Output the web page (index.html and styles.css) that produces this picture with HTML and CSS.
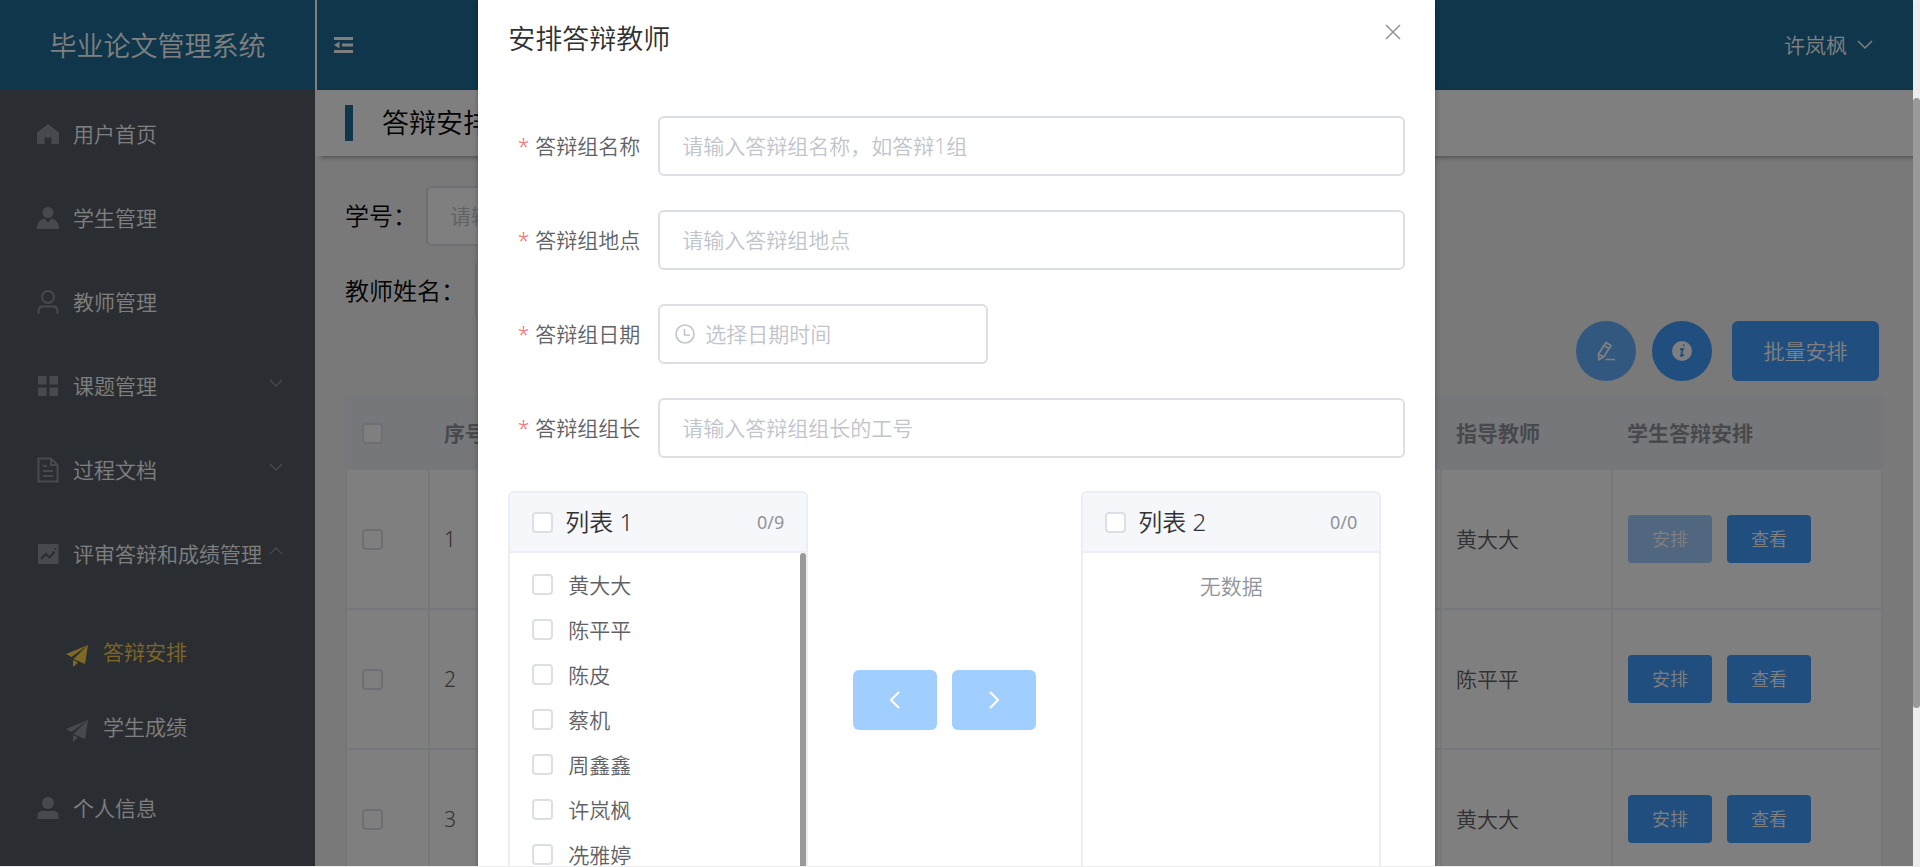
FILE: index.html
```html
<!DOCTYPE html>
<html lang="zh-CN">
<head>
<meta charset="utf-8">
<title>毕业论文管理系统</title>
<link rel="stylesheet" href="styles.css">
</head>
<body>
<div class="app">
  <aside class="sidebar">
    <div class="logo">毕业论文管理系统</div>
    <nav>
      <ul class="menu">
        <li><a class="menu-item" href="#"><svg class="icon" viewBox="0 0 22 22"><path d="M11 1 22 9.500V21h-7.500v-6.500h-7V21H0V9.500z"/></svg>用户首页</a></li>
        <li><a class="menu-item" href="#"><svg class="icon" viewBox="0 0 22 22"><circle cx="11" cy="5.500" r="5.500"/><path d="M0 22c0-6 3-9.500 7.500-10.500L11 16l3.500-4.500C19 12.500 22 16 22 22z"/></svg>学生管理</a></li>
        <li><a class="menu-item" href="#"><svg class="icon line" viewBox="0 0 22 22"><circle cx="11" cy="6" r="6"/><path d="M1.500 23v-3q0-4.500 4.500-4.500h10q4.500 0 4.500 4.500v3"/></svg>教师管理</a></li>
        <li><a class="menu-item" href="#"><svg class="icon" viewBox="0 0 22 22"><path d="M1 1h8.500v8.500H1zM12.500 1H21v8.500h-8.500zM1 12.500h8.500V21H1zM12.500 12.500H21V21h-8.500z"/></svg><span class="menu-text">课题管理</span><svg class="arrow" viewBox="0 0 14 8"><path d="M1 1l6 6 6-6"/></svg></a></li>
        <li><a class="menu-item" href="#"><svg class="icon line" viewBox="0 0 22 22"><path d="M1.500-.5H14l6.500 6.500v16.500h-19zM14 0v6h6M6 7h4M6 12h10M6 17h10"/></svg><span class="menu-text">过程文档</span><svg class="arrow" viewBox="0 0 14 8"><path d="M1 1l6 6 6-6"/></svg></a></li>
        <li>
          <a class="menu-item" href="#"><svg class="icon" viewBox="0 0 22 22"><path d="M1 1h20.500v20H1z"/><path class="trend" d="M4 16l5-5 3.500 3.500 5-6M18 6.500l1-1"/></svg><span class="menu-text">评审答辩和成绩管理</span><svg class="arrow" viewBox="0 0 14 8"><path d="M1 7l6-6 6 6"/></svg></a>
          <ul class="submenu">
            <li><a class="menu-item active" href="#"><svg class="icon" viewBox="0 0 22 22"><path d="M0 9 22 0 5.500 12zM22 0 19 19l-11.500-5zM7 15l5 2.500L7 22z"/></svg>答辩安排</a></li>
            <li><a class="menu-item" href="#"><svg class="icon" viewBox="0 0 22 22"><path d="M0 9 22 0 5.500 12zM22 0 19 19l-11.500-5zM7 15l5 2.500L7 22z"/></svg>学生成绩</a></li>
          </ul>
        </li>
        <li><a class="menu-item" href="#"><svg class="icon" viewBox="0 0 22 22"><circle cx="11" cy="6" r="6"/><path d="M.5 22v-3q0-5 5-5h11q5 0 5 5v3z"/></svg>个人信息</a></li>
      </ul>
    </nav>
  </aside>

  <div class="main">
    <header class="topbar">
      <button class="collapse" aria-label="收起菜单"><svg width="19" height="16" viewBox="0 0 19 16"><path d="M0 0h19v3H0zM8 6.500h11v3H8zM0 13h19v3H0zM0 8l5.500-3.500v7z"/></svg></button>
      <button class="user">许岚枫<svg width="16" height="10" viewBox="0 0 16 10"><path d="M1 1l7 7 7-7"/></svg></button>
    </header>
    <h1 class="page-title">答辩安排</h1>
    <main class="content">
      <form class="filters">
        <div class="filter"><label for="sno">学号：</label><input class="field" id="sno" type="text" placeholder="请输入学号"></div>
        <div class="filter wide"><label for="tname">教师姓名：</label><input class="field" id="tname" type="text"></div>
      </form>
      <div class="actions">
        <button class="round light" aria-label="编辑"><svg width="20" height="20" viewBox="0 0 20 20"><path class="stroke" d="M10 1.500l5 3-7 11-5 3-.5-5.500zM8 4.500l5 3M3 13.500l5 2.500M9.500 18.500H19"/></svg></button>
        <button class="round" aria-label="说明"><svg width="20" height="20" viewBox="0 0 20 20"><circle cx="10" cy="10" r="10"/><path class="mark" d="M11.300 4.500l1-.8M8 8.500l3-.5-2 6.500q0 1.500 2.800-1"/></svg></button>
        <button class="batch">批量安排</button>
      </div>
      <table class="grid">
        <colgroup><col class="c-check"><col><col class="c-teacher"><col class="c-ops"></colgroup>
        <thead>
          <tr><th><input type="checkbox" aria-label="全选"></th><th>序号</th><th>指导教师</th><th>学生答辩安排</th></tr>
        </thead>
        <tbody>
          <tr><td><input type="checkbox" aria-label="选择 1"></td><td>1</td><td>黄大大</td><td><div class="ops"><button disabled>安排</button><button>查看</button></div></td></tr>
          <tr><td><input type="checkbox" aria-label="选择 2"></td><td>2</td><td>陈平平</td><td><div class="ops"><button>安排</button><button>查看</button></div></td></tr>
          <tr><td><input type="checkbox" aria-label="选择 3"></td><td>3</td><td>黄大大</td><td><div class="ops"><button>安排</button><button>查看</button></div></td></tr>
        </tbody>
      </table>
    </main>
  </div>

  <div class="overlay">
    <section class="dialog" role="dialog" aria-labelledby="dlg-title">
      <div class="dialog-head">
        <h2 id="dlg-title">安排答辩教师</h2>
        <button class="close" aria-label="关闭"><svg width="16" height="16" viewBox="0 0 16 16"><path d="M1 1l14 14M15 1 1 15"/></svg></button>
      </div>
      <form class="dialog-form">
        <div class="row"><label for="g-name">答辩组名称</label><input class="field" id="g-name" type="text" placeholder="请输入答辩组名称，如答辩1组"></div>
        <div class="row"><label for="g-place">答辩组地点</label><input class="field" id="g-place" type="text" placeholder="请输入答辩组地点"></div>
        <div class="row"><label for="g-date">答辩组日期</label><div class="date field"><svg width="20" height="20" viewBox="0 0 20 20"><circle cx="10" cy="10" r="9"/><path d="M9.500 5v6H15"/></svg><input id="g-date" type="text" placeholder="选择日期时间"></div></div>
        <div class="row"><label for="g-head">答辩组组长</label><input class="field" id="g-head" type="text" placeholder="请输入答辩组组长的工号"></div>
      </form>
      <div class="transfer">
        <div class="panel">
          <div class="panel-head"><label><input type="checkbox">列表 1</label><span>0/9</span></div>
          <div class="panel-body">
            <ul>
              <li><label><input type="checkbox">黄大大</label></li>
              <li><label><input type="checkbox">陈平平</label></li>
              <li><label><input type="checkbox">陈皮</label></li>
              <li><label><input type="checkbox">蔡机</label></li>
              <li><label><input type="checkbox">周鑫鑫</label></li>
              <li><label><input type="checkbox">许岚枫</label></li>
              <li><label><input type="checkbox">冼雅婷</label></li>
            </ul>
            <div class="list-thumb"></div>
          </div>
        </div>
        <div class="transfer-buttons">
          <button disabled aria-label="移到左侧"><svg width="10" height="18" viewBox="0 0 10 18"><path d="M9 1 1 9l8 8"/></svg></button>
          <button disabled aria-label="移到右侧"><svg width="10" height="18" viewBox="0 0 10 18"><path d="M1 1l8 8-8 8"/></svg></button>
        </div>
        <div class="panel">
          <div class="panel-head"><label><input type="checkbox">列表 2</label><span>0/0</span></div>
          <div class="panel-body"><p class="empty">无数据</p></div>
        </div>
      </div>
    </section>
  </div>
  <div class="scrollbar"><div class="scroll-thumb"></div></div>
</div>
</body>
</html>
```
FILE: styles.css
```css
* { box-sizing: border-box; }
body {
  margin: 0;
  height: 100vh;
  overflow: hidden;
  background: #eeeeee;
  border-bottom: 1px solid #eeeeee;
  font-family: "Noto Sans", "Noto Sans CJK SC", sans-serif;
  font-size: 21px;
  font-weight: 350;
  line-height: 30px;
  color: #606266;
}
ul { list-style: none; margin: 0; padding: 0; }
h1, h2, p { margin: 0; font-weight: inherit; }
button, input { font: inherit; }
button { border: 0; padding: 0; background: none; color: #ffffff; }
a { color: inherit; text-decoration: none; }
svg { display: block; flex: none; }
input[type="checkbox"] {
  appearance: none;
  display: block;
  flex: none;
  width: 21px;
  height: 21px;
  margin: 0;
  background: #ffffff;
  border: 2px solid #dcdfe6;
  border-radius: 4px;
}
.field {
  height: 60px;
  min-width: 0;
  padding: 0 22px;
  background: #ffffff;
  border: 2px solid #dcdfe6;
  border-radius: 6px;
  outline: 0;
}
::placeholder { color: #c0c4cc; opacity: 1; }

.app {
  position: relative;
  display: flex;
  height: 100%;
  overflow: hidden;
  background: #f2f2f2;
}

/* Sidebar */
.sidebar { flex: none; width: 315px; background: #545c64; color: #ffffff; }
.logo {
  display: flex;
  align-items: center;
  justify-content: center;
  height: 90px;
  padding-top: 2px;
  background: #1e6c96;
  font-size: 27px;
}
.menu { padding-top: 2px; }
.menu-item {
  display: flex;
  align-items: center;
  gap: 14px;
  height: 84px;
  padding: 0 32px 0 37px;
  white-space: nowrap;
}
.menu-text { flex: 1; }
.icon { width: 22px; height: 22px; fill: #909399; overflow: visible; }
.icon.line { fill: none; stroke: #909399; stroke-width: 2; }
.trend { fill: none; stroke: #545c64; stroke-width: 2; }
.arrow { width: 14px; height: 8px; margin: 0 0 6px -14px; fill: none; stroke: #909399; stroke-width: 1.4; }
.submenu { padding: 18px 0 2px; }
.submenu .menu-item { height: 75px; padding-left: 66px; gap: 15px; }
.submenu .icon { margin-top: 8px; }
.active { color: #ffd04b; }
.active .icon { fill: #ffd04b; }

/* Page */
.main { flex: 1; min-width: 0; padding-right: 7px; }
.topbar {
  display: flex;
  align-items: center;
  justify-content: space-between;
  height: 90px;
  padding: 0 40px 0 17px;
  background: #1e6c96;
  border-left: 2px solid #ffffff;
}
.collapse { fill: #ffffff; }
.user { display: flex; align-items: center; gap: 10px; }
.user svg { fill: none; stroke: #ffffff; stroke-width: 1.5; }
.page-title {
  display: flex;
  align-items: center;
  gap: 29px;
  height: 66px;
  padding-left: 30px;
  background: #ffffff;
  box-shadow: 6px 2px 4px rgba(0, 0, 0, 0.3);
  color: #000000;
  font-size: 27px;
}
.page-title::before { content: ""; width: 8px; height: 36px; background: #1e6c96; }
.content { padding: 30px; }
.filters { display: flex; flex-direction: column; gap: 15px; }
.filter { display: flex; align-items: center; color: #000000; font-size: 24px; }
.filter label { width: 81px; white-space: nowrap; }
.filter.wide label { width: 130px; }
.filter .field { width: 330px; font-size: 21px; }
.actions { display: flex; justify-content: flex-end; gap: 16px; padding-right: 4px; }
.round {
  display: flex;
  align-items: center;
  justify-content: center;
  width: 60px;
  height: 60px;
  border-radius: 50%;
  background: #409eff;
  fill: #ffffff;
}
.round.light { background: #66b1ff; }
.stroke { fill: none; stroke: #ffffff; stroke-width: 1.7; }
.mark { fill: none; stroke: #409eff; stroke-width: 1.8; }
.batch { width: 147px; height: 60px; margin-left: 4px; border-radius: 6px; background: #409eff; }

.grid {
  width: 100%;
  margin-top: 15px;
  table-layout: fixed;
  border-spacing: 0;
  background: #ffffff;
  border-left: 2px solid #ebeef5;
}
.c-check { width: 83px; }
.c-teacher { width: 171px; }
.c-ops { width: 270px; }
.grid th {
  height: 74px;
  padding: 0 14px;
  background: #ebeef5;
  color: #909399;
  font-weight: 700;
  text-align: left;
}
.grid td {
  height: 140px;
  padding: 0 14px;
  border-right: 2px solid #ebeef5;
  border-bottom: 2px solid #ebeef5;
}
.grid th:first-child, .grid td:first-child, .grid td:last-child { padding-left: 15px; }
.ops { display: flex; gap: 15px; }
.ops button { width: 84px; height: 48px; border-radius: 4px; background: #409eff; font-size: 18px; }
.ops button:disabled { background: #a0cfff; }

/* Dialog */
.overlay {
  position: absolute;
  inset: 0 7px 0 0;
  display: flex;
  justify-content: center;
  align-items: flex-start;
  background: rgba(0, 0, 0, 0.5);
}
.dialog {
  width: 50%;
  padding: 0 30px 60px;
  background: #ffffff;
  box-shadow: 0 2px 5px rgba(0, 0, 0, 0.3);
}
.dialog-head { display: flex; justify-content: space-between; height: 78px; padding-right: 4px; }
.dialog-head h2 { padding-top: 24px; font-size: 27px; color: #303133; }
.close { align-self: flex-start; padding-top: 24px; }
.close svg { fill: none; stroke: #909399; stroke-width: 1.5; }
.dialog-form { display: grid; gap: 34px; padding: 38px 0 33px; }
.row { display: flex; align-items: center; }
.row label { flex: none; width: 150px; padding-right: 18px; text-align: right; }
.row label::before { content: "*"; margin-right: 6px; color: #f56c6c; }
.row > input { flex: 1; }
.date { display: flex; align-items: center; gap: 10px; width: 330px; padding: 0 15px; }
.date svg { fill: none; stroke: #c0c4cc; stroke-width: 1.6; }
.date input { flex: 1; min-width: 0; padding: 0; border: 0; outline: 0; background: none; }

.transfer { display: flex; align-items: center; }
.panel { flex: none; width: 300px; border: 2px solid #ebeef5; border-radius: 6px; overflow: hidden; }
.panel label { display: flex; align-items: center; }
.panel-head {
  display: flex;
  align-items: center;
  justify-content: space-between;
  height: 60px;
  padding: 0 22px;
  background: #f5f7fa;
  border-bottom: 2px solid #ebeef5;
}
.panel-head label { gap: 12px; font-size: 24px; color: #303133; }
.panel-head span { font-size: 18px; font-weight: 400; color: #909399; }
.panel-body { display: flex; justify-content: space-between; height: 354px; }
.panel-body ul { padding: 9px 22px; }
.panel-body li label { gap: 15px; height: 45px; }
.list-thumb { width: 6px; background: #999999; border-radius: 3px; }
.empty { flex: 1; height: 45px; padding-top: 18px; text-align: center; color: #909399; }
.transfer-buttons { display: flex; gap: 15px; padding: 0 45px; }
.transfer-buttons button {
  display: flex;
  align-items: center;
  justify-content: center;
  width: 84px;
  height: 60px;
  border-radius: 6px;
  background: #a0cfff;
}
.transfer-buttons svg { fill: none; stroke: #ffffff; stroke-width: 2; }

/* Window scrollbar */
.scrollbar { position: absolute; inset: 0 0 0 auto; width: 7px; padding-top: 98px; background: #ededed; border-radius: 4px; }
.scroll-thumb { height: 610px; border-radius: 4px; background: #999999; }
```
